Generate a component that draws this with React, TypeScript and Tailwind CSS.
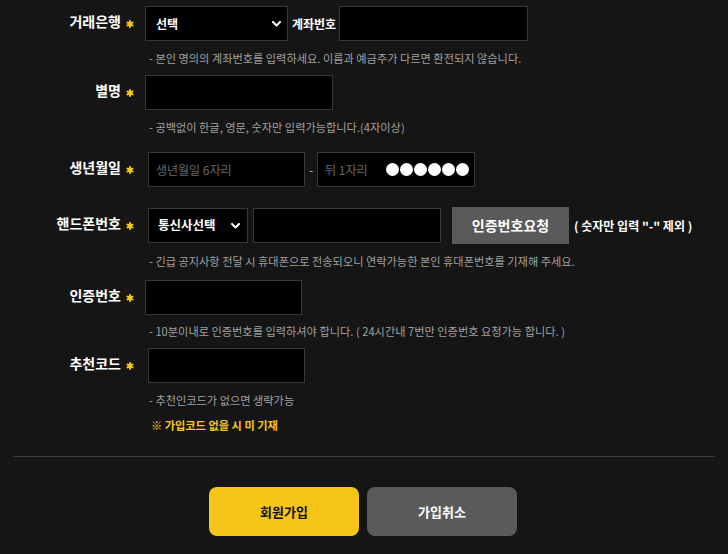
import React from "react";

const FONT = { fontFamily: '"Noto Sans CJK KR", "Noto Sans", sans-serif' };

function Chevron() {
  return (
    <svg width="9" height="6" viewBox="0 0 9 6" fill="none">
      <path d="M1 1 L4.5 4.5 L8 1" stroke="#fff" strokeWidth="2" strokeLinecap="round" strokeLinejoin="round" />
    </svg>
  );
}

function Star() {
  return (
    <svg width="8" height="8" viewBox="0 0 8 8" className="ml-[5px]">
      <g fill="#f5c518">
        <rect x="3" y="0" width="2" height="8" rx="1" />
        <rect x="3" y="0" width="2" height="8" rx="1" transform="rotate(60 4 4)" />
        <rect x="3" y="0" width="2" height="8" rx="1" transform="rotate(120 4 4)" />
        <circle cx="4" cy="4" r="2.4" />
      </g>
    </svg>
  );
}

function Label({ children }: { children: React.ReactNode }) {
  return (
    <div className="w-[134px] shrink-0 flex items-center justify-end">
      <span className="text-[14px] font-bold text-white leading-none mb-[5px]">{children}</span>
      <Star />
    </div>
  );
}

function Help({ children, h }: { children: React.ReactNode; h: string }) {
  return (
    <div className={`flex items-center pl-[149px] text-[11.2px] text-[#a0a0a0] ${h}`}>{children}</div>
  );
}

const box = "h-[35px] bg-black border border-[#383838]";

export default function App() {
  return (
    <div className="w-[728px] h-[554px] bg-[#151515] overflow-hidden" style={FONT}>
      <div className="flex flex-col pt-[6px]">
        {/* 거래은행 */}
        <div className="flex items-center h-[35px]">
          <Label>거래은행</Label>
          <div className={`${box} ml-[11px] w-[143px] flex items-center justify-between pl-[10px] pr-[6px]`}>
            <span className="text-[12px] font-bold text-white">선택</span>
            <Chevron />
          </div>
          <span className="ml-[4px] text-[12px] font-bold text-white">계좌번호</span>
          <div className={`${box} ml-[3px] w-[189px]`} />
        </div>
        <Help h="h-[34px]">- 본인 명의의 계좌번호를 입력하세요. 이름과 예금주가 다르면 환전되지 않습니다.</Help>

        {/* 별명 */}
        <div className="flex items-center h-[35px]">
          <Label>별명</Label>
          <div className={`${box} ml-[11px] w-[188px]`} />
        </div>
        <Help h="h-[34px]">- 공백없이 한글, 영문, 숫자만 입력가능합니다.(4자이상)</Help>

        {/* 생년월일 */}
        <div className="flex items-center h-[35px] mt-[8px]">
          <Label>생년월일</Label>
          <div className={`${box} ml-[14px] w-[157px] flex items-center pl-[7px]`}>
            <span className="text-[12px] text-[#6a6a6a]">생년월일 6자리</span>
          </div>
          <span className="w-[12px] text-center text-[12px] text-[#bbbbbb]">-</span>
          <div className={`${box} w-[158px] flex items-center pl-[7px]`}>
            <span className="text-[12px] text-[#6a6a6a]">뒤 1자리</span>
            <div className="ml-[19px] flex gap-[1px]">
              {[0, 1, 2, 3, 4, 5].map((i) => (
                <span key={i} className="block w-[13px] h-[13px] rounded-full bg-white" />
              ))}
            </div>
          </div>
        </div>

        {/* 핸드폰번호 */}
        <div className="flex items-center h-[35px] mt-[21px]">
          <Label>핸드폰번호</Label>
          <div className={`${box} ml-[14px] w-[100px] flex items-center justify-between pl-[9px] pr-[7px]`}>
            <span className="text-[12.5px] font-bold text-white">통신사선택</span>
            <Chevron />
          </div>
          <div className={`${box} ml-[5px] w-[188px]`} />
          <button className="ml-[11px] w-[117px] h-[37px] bg-[#5a5a5a] text-white text-[14px] font-bold">인증번호요청</button>
          <span className="ml-[5px] text-[12px] font-bold text-white">( 숫자만 입력 "-" 제외 )</span>
        </div>
        <Help h="h-[37px]">- 긴급 공지사항 전달 시 휴대폰으로 전송되오니 연락가능한 본인 휴대폰번호를 기재해 주세요.</Help>

        {/* 인증번호 */}
        <div className="flex items-center h-[35px]">
          <Label>인증번호</Label>
          <div className={`${box} ml-[11px] w-[157px]`} />
        </div>
        <Help h="h-[33px]">- 10분이내로 인증번호를 입력하셔야 합니다. ( 24시간내 7번만 인증번호 요청가능 합니다. )</Help>

        {/* 추천코드 */}
        <div className="flex items-center h-[35px]">
          <Label>추천코드</Label>
          <div className={`${box} ml-[14px] w-[157px]`} />
        </div>
        <Help h="h-[34px]">- 추천인코드가 없으면 생략가능</Help>
        <div className="h-[16px] flex items-center pl-[151px] text-[11.2px] font-bold text-[#f5c518]">※ 가입코드 없을 시 미 기재</div>

        <div className="mt-[23px] mx-[13px] border-t border-[#3a3a3a]" />

        <div className="mt-[30px] flex justify-center gap-[8px] pr-[2px]">
          <button className="w-[150px] h-[49px] rounded-[8px] bg-[#f5c518] text-[#111] text-[13px] font-bold">회원가입</button>
          <button className="w-[150px] h-[49px] rounded-[8px] bg-[#5a5a5a] text-white text-[13px] font-bold">가입취소</button>
        </div>
      </div>
    </div>
  );
}
